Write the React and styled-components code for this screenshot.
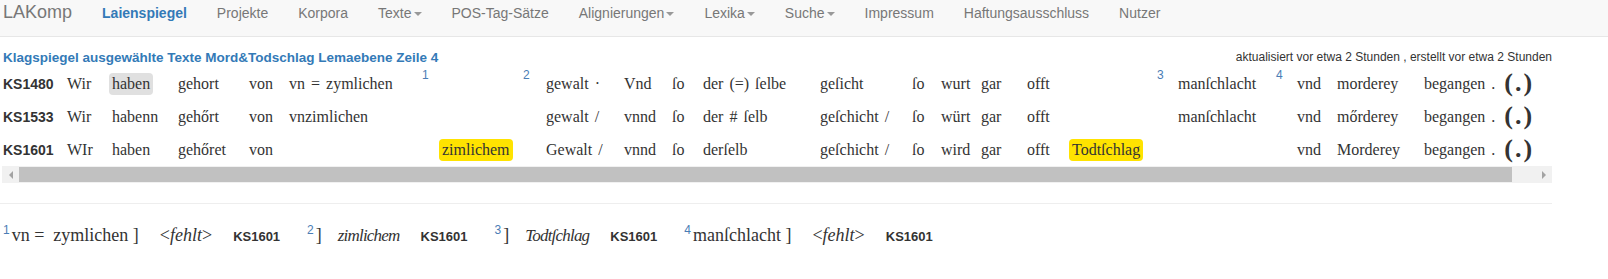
import React from 'react';
import styled, { createGlobalStyle } from 'styled-components';

const GlobalStyle = createGlobalStyle`
  body {
    margin: 0;
    background: #fff;
    color: #333;
    font-family: "Liberation Sans", Arial, sans-serif;
  }
`;

const Navbar = styled.nav`
  display: flex;
  align-items: flex-start;
  height: 36px;
  background: #f8f8f8;
  border-bottom: 1px solid #e7e7e7;
`;

const Brand = styled.span`
  padding: 2px 15px 0 3px;
  font-size: 18px;
  line-height: 20px;
  color: #777;
`;

const NavItem = styled.span`
  padding: 5px 15px 0;
  font-size: 14px;
  line-height: 16px;
  color: ${({ $active }) => ($active ? '#337ab7' : '#777')};
  font-weight: ${({ $active }) => ($active ? 'bold' : 'normal')};
  white-space: nowrap;
`;

const Caret = styled.span`
  display: inline-block;
  width: 0;
  height: 0;
  margin-left: 2px;
  vertical-align: middle;
  border-top: 4px solid #999;
  border-left: 4px solid transparent;
  border-right: 4px solid transparent;
`;

const Main = styled.main`
  width: 1550px;
  margin-left: 2px;
`;

const Header = styled.div`
  display: flex;
  justify-content: space-between;
  align-items: center;
  margin-top: 12px;
  height: 16px;
`;

const Title = styled.h4`
  margin: 0;
  padding-left: 1px;
  font-size: 13.5px;
  font-weight: bold;
  color: #337ab7;
`;

const Meta = styled.span`
  font-size: 12px;
  color: #333;
`;

const Synopse = styled.div`
  display: grid;
  grid-template-columns: 62px 45px 66px 71px 40px 133px 20px 81px 23px 78px 48px 31px 117px 92px 29px 40px 46px 45px 85px 21px 98px 21px 40px 87px auto;
  grid-auto-rows: 33px;
  align-items: center;
  margin-top: 2px;
  font-family: "Liberation Serif", "DejaVu Serif", serif;
  font-size: 16px;
  color: #333;
  word-spacing: 2px;
`;

const Sigle = styled.span`
  padding-left: 1px;
  font-family: "Liberation Sans", Arial, sans-serif;
  font-size: 14px;
  font-weight: bold;
`;

const Word = styled.span`
  justify-self: start;
  padding: 2px 3px;
  line-height: 18px;
  border-radius: 4px;
  white-space: nowrap;
  background: ${({ $hl }) => ($hl === 'gray' ? '#e0e0e0' : $hl === 'yellow' ? '#ffe300' : 'transparent')};
`;

const Mark = styled.span`
  align-self: start;
  padding: 1px 0 0 3px;
  font-family: "Liberation Sans", Arial, sans-serif;
  font-size: 12px;
  line-height: 14px;
  color: #4a7db5;
`;

const Pause = styled.span`
  margin-left: 9px;
  font-size: 26px;
  font-weight: bold;
  letter-spacing: 2px;
  vertical-align: -2px;
`;

const ScrollTrack = styled.div`
  display: flex;
  align-items: center;
  height: 17px;
  background: #f1f1f1;
`;

const ScrollButton = styled.div`
  display: flex;
  align-items: center;
  justify-content: center;
  width: 17px;
  height: 17px;

  &::after {
    content: '';
    border-top: 4px solid transparent;
    border-bottom: 4px solid transparent;
    ${({ $dir }) => ($dir === 'left' ? 'border-right' : 'border-left')}: 4px solid #a3a3a3;
  }
`;

const ScrollThumb = styled.div`
  width: 1493px;
  height: 15px;
  background: #c1c1c1;
`;

const Spacer = styled.div`
  flex: 1;
`;

const Rule = styled.hr`
  margin: 20px 0 20px -2px;
  border: 0;
  border-top: 1px solid #eee;
`;

const Notes = styled.div`
  height: 22px;
  padding-left: 1px;
  font-family: "Liberation Serif", "DejaVu Serif", serif;
  font-size: 18px;
  line-height: 22px;
  color: #333;
  white-space: nowrap;
`;

const Note = styled.span`
  margin-right: 27px;
  white-space: pre;
`;

const NoteMark = styled.sup`
  margin-right: 2px;
  font-family: "Liberation Sans", Arial, sans-serif;
  font-size: 12px;
  line-height: 0;
  vertical-align: 7px;
  color: #4a7db5;
`;

const Reading = styled.span`
  margin-left: ${({ $italic }) => ($italic ? 16 : 21)}px;
  font-size: ${({ $italic }) => ($italic ? 17 : 18)}px;
  letter-spacing: ${({ $italic }) => ($italic ? '-0.8px' : '0')};
  font-style: ${({ $italic }) => ($italic ? 'italic' : 'normal')};
`;

const NoteSigle = styled.span`
  margin-left: 21px;
  font-family: "Liberation Sans", Arial, sans-serif;
  font-size: 13px;
  font-weight: bold;
`;

const navItems = [
  { label: 'Laienspiegel', active: true },
  { label: 'Projekte' },
  { label: 'Korpora' },
  { label: 'Texte', menu: true },
  { label: 'POS-Tag-Sätze' },
  { label: 'Alignierungen', menu: true },
  { label: 'Lexika', menu: true },
  { label: 'Suche', menu: true },
  { label: 'Impressum' },
  { label: 'Haftungsausschluss' },
  { label: 'Nutzer' },
];

const oe = 'ő';

// one entry per grid column; {m} is a footnote mark, {hl} a highlighted reading
const rows = [
  ['KS1480', 'Wir', { t: 'haben', hl: 'gray' }, 'gehort', 'von', 'vn =  zymlichen', { m: '1' }, '', { m: '2' },
    'gewalt ·', 'Vnd', 'ſo', 'der (=) ſelbe', 'geſicht', 'ſo', 'wurt', 'gar', 'offt', '', { m: '3' },
    'manſchlacht', { m: '4' }, 'vnd', 'morderey', 'begangen .'],
  ['KS1533', 'Wir', 'habenn', `geh${oe}rt`, 'von', 'vnzimlichen', '', '', '',
    'gewalt /', 'vnnd', 'ſo', 'der # ſelb', 'geſchicht /', 'ſo', 'würt', 'gar', 'offt', '', '',
    'manſchlacht', '', 'vnd', `m${oe}rderey`, 'begangen .'],
  ['KS1601', 'WIr', 'haben', `geh${oe}ret`, 'von', '', '', { t: 'zimlichem', hl: 'yellow' }, '',
    'Gewalt /', 'vnnd', 'ſo', 'derſelb', 'geſchicht /', 'ſo', 'wird', 'gar', 'offt', { t: 'Todtſchlag', hl: 'yellow' }, '',
    '', '', 'vnd', 'Morderey', 'begangen .'],
];

const notes = [
  { n: '1', lemma: 'vn =  zymlichen ]', reading: null, sigle: 'KS1601' },
  { n: '2', lemma: ']', reading: 'zimlichem', sigle: 'KS1601' },
  { n: '3', lemma: ']', reading: 'Todtſchlag', sigle: 'KS1601' },
  { n: '4', lemma: 'manſchlacht ]', reading: null, sigle: 'KS1601' },
];

const renderCell = (cell, i, last) => {
  if (i === 0) return <Sigle key={i}>{cell}</Sigle>;
  if (cell && cell.m) return <Mark key={i}>{cell.m}</Mark>;
  if (cell && cell.t) return <Word key={i} $hl={cell.hl}>{cell.t}</Word>;
  if (!cell) return <span key={i} />;
  return (
    <Word key={i}>
      {cell}
      {last && <Pause>(.)</Pause>}
    </Word>
  );
};

const App = () => (
  <>
    <GlobalStyle />
    <Navbar>
      <Brand>LAKomp</Brand>
      {navItems.map((item) => (
        <NavItem key={item.label} $active={item.active}>
          {item.label}
          {item.menu && <Caret />}
        </NavItem>
      ))}
    </Navbar>
    <Main>
      <Header>
        <Title>Klagspiegel ausgewählte Texte Mord&amp;Todschlag Lemaebene Zeile 4</Title>
        <Meta>aktualisiert vor etwa 2 Stunden , erstellt vor etwa 2 Stunden</Meta>
      </Header>
      <Synopse>
        {rows.map((row) => row.map((cell, i) => renderCell(cell, i, i === row.length - 1)))}
      </Synopse>
      <ScrollTrack>
        <ScrollButton $dir="left" />
        <ScrollThumb />
        <Spacer />
        <ScrollButton $dir="right" />
      </ScrollTrack>
      <Rule />
      <Notes>
        {notes.map((note) => (
          <Note key={note.n}>
            <NoteMark>{note.n}</NoteMark>
            {note.lemma}
            {note.reading ? (
              <Reading $italic>{note.reading}</Reading>
            ) : (
              <Reading>&lt;<i>fehlt</i>&gt;</Reading>
            )}
            <NoteSigle>{note.sigle}</NoteSigle>
          </Note>
        ))}
      </Notes>
    </Main>
  </>
);

export default App;
